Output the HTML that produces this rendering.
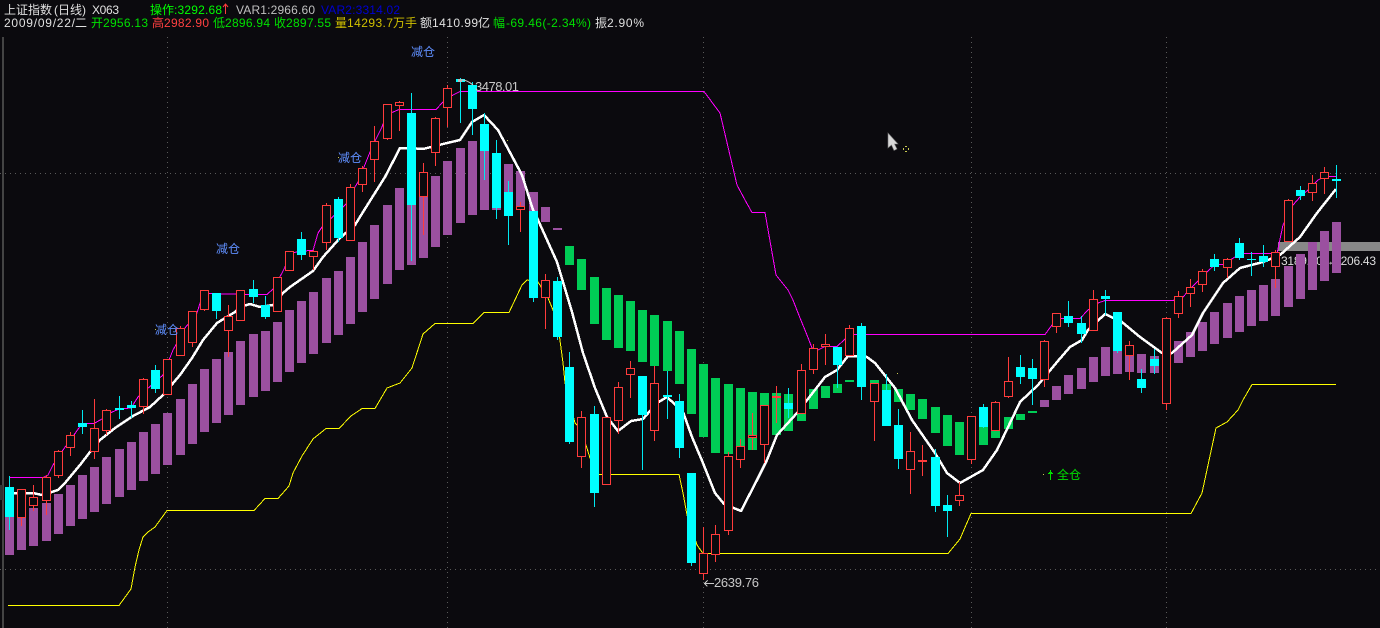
<!DOCTYPE html>
<html lang="zh"><head><meta charset="utf-8"><title>上证指数</title>
<style>
html,body{margin:0;padding:0;background:#0b0a0e;width:1380px;height:628px;overflow:hidden}
svg{display:block;position:absolute;left:0;top:0}
text{font-family:"Liberation Sans","WenQuanYi Zen Hei","Noto Sans CJK SC",sans-serif;font-size:12px}
</style></head><body>
<svg width="1380" height="628" viewBox="0 0 1380 628" xmlns="http://www.w3.org/2000/svg">
<rect width="1380" height="628" fill="#0b0a0e"/>
<g shape-rendering="crispEdges">
<rect x="2" y="37" width="2" height="591" fill="#444"/>
<rect x="0" y="485" width="3" height="15" fill="#333"/>
<path d="M0 173.5H1380M0 569.5H1380M167.5 37V628M447.5 37V628M703.5 37V628M971.5 37V628M1166.5 37V628" stroke="#5a5a5a" stroke-width="1" stroke-dasharray="1 4" fill="none"/>
<rect x="1278" y="242" width="102" height="9" fill="#888"/>
</g>
<text x="1281" y="265" fill="#ddd" textLength="95" lengthAdjust="spacing">3189.00→3206.43</text>
<g shape-rendering="crispEdges">
<path fill="#9b50a0" d="M5 510h9V555h-9zM17 505h9V550h-9zM29 508h9V546h-9zM42 503h9V541h-9zM54 494h9V534h-9zM66 485h9V526h-9zM78 475h9V519h-9zM90 467h9V512h-9zM102 457h9V504h-9zM115 449h9V497h-9zM127 442h9V490h-9zM139 432h9V481h-9zM151 424h9V474h-9zM163 413h9V465h-9zM176 399h9V455h-9zM188 384h9V444h-9zM200 369h9V432h-9zM212 359h9V423h-9zM224 352h9V415h-9zM236 341h9V405h-9zM249 334h9V397h-9zM261 331h9V391h-9zM273 322h9V382h-9zM285 310h9V372h-9zM297 301h9V363h-9zM309 292h9V354h-9zM322 278h9V343h-9zM334 271h9V335h-9zM346 257h9V324h-9zM358 242h9V312h-9zM370 225h9V299h-9zM383 205h9V284h-9zM395 188h9V270h-9zM407 175h9V265h-9zM419 175h9V258h-9zM431 176h9V247h-9zM443 161h9V235h-9zM456 148h9V223h-9zM468 141h9V215h-9zM480 150h9V210h-9zM492 160h9V210h-9zM504 164h9V210h-9zM516 171h9V210h-9zM529 192h9V215h-9zM541 207h9V222h-9zM553 228h9V230h-9zM1040 400h9V407h-9zM1052 386h9V400h-9zM1064 375h9V394h-9zM1077 368h9V389h-9zM1089 357h9V382h-9zM1101 347h9V376h-9zM1113 345h9V374h-9zM1125 345h9V372h-9zM1137 354h9V373h-9zM1150 356h9V373h-9zM1174 341h9V363h-9zM1186 332h9V357h-9zM1198 322h9V351h-9zM1210 312h9V344h-9zM1223 303h9V338h-9zM1235 296h9V332h-9zM1247 290h9V326h-9zM1259 285h9V321h-9zM1271 279h9V316h-9zM1284 266h9V307h-9zM1296 254h9V299h-9zM1308 242h9V290h-9zM1320 231h9V281h-9zM1332 222h9V273h-9z"/>
<path fill="#00cc55" d="M565 246h9V265h-9zM577 259h9V290h-9zM590 277h9V324h-9zM602 288h9V340h-9zM614 295h9V348h-9zM626 301h9V351h-9zM638 310h9V362h-9zM650 315h9V366h-9zM663 321h9V371h-9zM675 331h9V384h-9zM687 349h9V414h-9zM699 364h9V437h-9zM711 378h9V453h-9zM724 384h9V454h-9zM736 388h9V446h-9zM748 392h9V450h-9zM760 393h9V444h-9zM772 393h9V435h-9zM784 394h9V431h-9zM797 398h9V421h-9zM809 389h9V409h-9zM821 386h9V398h-9zM833 384h9V393h-9zM845 380h9V382h-9zM870 380h9V384h-9zM882 384h9V392h-9zM894 389h9V402h-9zM906 394h9V410h-9zM918 399h9V419h-9zM931 407h9V433h-9zM943 415h9V446h-9zM955 422h9V455h-9zM979 425h9V445h-9zM991 425h9V438h-9zM1004 417h9V429h-9zM1016 414h9V420h-9zM1028 411h9V413h-9z"/>
<polyline fill="none" stroke="#ffff00" stroke-width="1" points="8,605.5 119,605.5 131,589 135,567 139,550 143,537 148,532 155,527 167,510.5 254,510.5 265,498.5 278,498.5 289,486 293,473 302,456 313,439 326,428.5 339,428.5 351,416 362,408.5 375,408.5 387,388 400,383 412,368 423,334 435,323.5 473,323.5 484,312.5 509,312.5 522,285 527,280 538,282 548,298 553,310 559,333 563,363 565,383 575,423 577,425 586,445 590,458 599,474.5 679,474.5 683,493 687,515 697,545 703,553.5 948,553.5 960,539 971,513.5 1191,513.5 1202,493 1216,428 1227,422 1238,410 1243,400 1252,384.5 1336,384.5"/>
<polyline fill="none" stroke="#ff00ff" stroke-width="1" points="9,477.5 43,477.5 48,475 53,465 63,450 68,443 74,435 82,423.5 94,423.5 102,419 110,413 119,409 131,408 138,397 163,375 173,350 177,343 185,328 197,313 201,300 208,293.5 245,294.5 267,294.5 273,289 282,273 285,267 290,253 309,250.5 313,250.5 318,233 322,227 340,210 347,203 355,187 358,182 368,157 372,147 382,127 387,112.5 392,112.5 399,109.5 436,109.5 443,102 453,95 460,91.5 704,91.5 720,113 737,185 745,200 752,212.5 765,212.5 776,275 788,290 793,300 800,318 807,335 812,348 818,350 825,346.5 837,346.5 845,339 854,334.5 1045,334.5 1052,325 1057,318.5 1080,318.5 1088,310 1098,303 1105,300.5 1173,300.5 1183,297 1192,287 1207,272 1215,264.5 1223,264.5 1235,257 1243,253.5 1277,253.5 1283,225 1293,205 1300,197 1308,190 1318,180 1325,176.5 1336,176.5"/>
<polyline fill="none" stroke="#ffffff" stroke-width="2.5" stroke-linejoin="round" points="14,493 33,493 42,495 58,490 65,483 80,465 90,452 100,440 115,428 133,416 150,407 163,395 180,375 192,358 203,340 217,323 235,312 240,307 250,304 260,307 273,305 283,293 290,287 313,271 323,257 340,238 355,225 363,212 385,177 400,148 410,148 423,149 443,144 460,140 472,122 484,115 498,130 522,175 533,210 538,220 557,262 560,272 572,312 583,353 595,388 607,417 618,431 631,421 643,419 657,403 667,397 683,412 692,437 703,463 715,493 724,504 741,511 757,480 767,460 777,435 797,413 825,377 837,370 848,356 867,357 875,363 895,388 912,420 935,453 947,473 960,483 983,470 997,450 1010,423 1020,402 1038,385 1057,362 1070,347 1082,340 1088,330 1105,314 1122,322 1140,337 1162,353 1172,353 1192,335 1203,313 1223,283 1240,268 1263,262 1280,255 1300,237 1317,213 1336,189"/>
<path fill="none" stroke="#00e8f0" stroke-width="1" d="M9.5 476V530M82.5 410V434M119.5 396V419M131.5 401V418M155.5 365V393M216.5 293V319M253.5 280V303M265.5 296V319M301.5 232V260M338.5 197V242M411.5 93V261M460.5 78V123M472.5 82V135M484.5 113V180M496.5 140V219M508.5 181V245M533.5 211V302M557.5 277V340M569.5 352V444M594.5 406V507M642.5 376V470M667.5 371V419M679.5 394V458M691.5 473V566M788.5 388V418M837.5 347V388M861.5 323V400M886.5 374V426M898.5 409V469M935.5 449V512M947.5 495V537M983.5 404V428M1020.5 355V384M1032.5 359V405M1068.5 301V327M1081.5 316V343M1105.5 290V315M1117.5 312V353M1141.5 369V393M1154.5 349V374M1214.5 254V271M1239.5 238V260M1251.5 252V276M1263.5 245V267M1300.5 186V200M1336.5 165V198"/>
<path fill="none" stroke="#ff3c3c" stroke-width="1" d="M21.5 489V526M33.5 485V511M46.5 475V515M58.5 450V478M70.5 432V456M94.5 399V459M106.5 409V435M143.5 378V414M180.5 326V355M192.5 311V347M204.5 290V311M228.5 305V357M289.5 251V271M313.5 250V270M326.5 203V250M350.5 184V241M362.5 166V192M374.5 126V182M387.5 104V140M399.5 101V131M423.5 163V235M435.5 117V166M447.5 85V127M520.5 202V232M545.5 274V329M581.5 411V468M618.5 382V434M630.5 361V398M654.5 366V441M703.5 527V580M715.5 525V562M728.5 452V535M740.5 439V468M752.5 413V450M764.5 405V463M776.5 386V423M801.5 364V414M813.5 344V374M825.5 334V365M849.5 325V355M874.5 383V441M910.5 432V494M922.5 445V476M959.5 482V506M971.5 416V464M995.5 401V430M1008.5 357V398M1044.5 340V387M1056.5 313V333M1093.5 290V331M1129.5 341V380M1166.5 317V410M1178.5 291V318M1190.5 279V307M1202.5 269V292M1227.5 258V278M1275.5 250V288M1288.5 199V241M1312.5 175V201M1324.5 167V194"/>
<path fill="#00ffff" d="M5 487h9V517h-9zM78 423h9V427h-9zM115 408h9V410h-9zM127 405h9V408h-9zM151 370h9V389h-9zM212 293h9V311h-9zM249 289h9V297h-9zM261 305h9V317h-9zM297 239h9V255h-9zM334 199h9V238h-9zM407 113h9V205h-9zM456 79h9V82h-9zM468 85h9V109h-9zM480 124h9V151h-9zM492 153h9V208h-9zM504 192h9V216h-9zM529 211h9V298h-9zM553 281h9V337h-9zM565 367h9V442h-9zM590 414h9V493h-9zM638 376h9V415h-9zM663 395h9V397h-9zM675 401h9V448h-9zM687 473h9V563h-9zM784 403h9V409h-9zM833 347h9V365h-9zM857 326h9V387h-9zM882 390h9V426h-9zM894 425h9V459h-9zM931 457h9V506h-9zM943 505h9V511h-9zM979 407h9V427h-9zM1016 367h9V377h-9zM1028 368h9V379h-9zM1064 316h9V323h-9zM1077 323h9V334h-9zM1101 296h9V299h-9zM1113 312h9V351h-9zM1137 379h9V388h-9zM1150 359h9V366h-9zM1210 259h9V267h-9zM1235 243h9V258h-9zM1247 259h9V260h-9zM1259 256h9V262h-9zM1296 190h9V196h-9zM1332 179h9V181h-9z"/>
<path fill="#0b0a0e" stroke="#ff3c3c" stroke-width="1" d="M17.5 489.5h8V517.5h-8zM29.5 497.5h8V505.5h-8zM42.5 477.5h8V500.5h-8zM54.5 451.5h8V475.5h-8zM66.5 435.5h8V447.5h-8zM90.5 428.5h8V451.5h-8zM102.5 410.5h8V430.5h-8zM139.5 379.5h8V406.5h-8zM163.5 359.5h8V394.5h-8zM176.5 328.5h8V355.5h-8zM188.5 311.5h8V342.5h-8zM200.5 290.5h8V309.5h-8zM224.5 316.5h8V330.5h-8zM236.5 290.5h8V320.5h-8zM273.5 277.5h8V311.5h-8zM285.5 251.5h8V270.5h-8zM309.5 251.5h8V256.5h-8zM322.5 205.5h8V242.5h-8zM346.5 187.5h8V240.5h-8zM358.5 168.5h8V184.5h-8zM370.5 141.5h8V159.5h-8zM383.5 104.5h8V138.5h-8zM395.5 102.5h8V105.5h-8zM419.5 172.5h8V196.5h-8zM431.5 118.5h8V152.5h-8zM443.5 88.5h8V107.5h-8zM516.5 206.5h8V209.5h-8zM541.5 280.5h8V297.5h-8zM577.5 417.5h8V456.5h-8zM602.5 417.5h8V484.5h-8zM614.5 387.5h8V420.5h-8zM626.5 368.5h8V374.5h-8zM650.5 383.5h8V430.5h-8zM699.5 553.5h8V573.5h-8zM711.5 534.5h8V554.5h-8zM724.5 456.5h8V530.5h-8zM736.5 446.5h8V459.5h-8zM748.5 435.5h8V437.5h-8zM760.5 405.5h8V444.5h-8zM797.5 370.5h8V413.5h-8zM809.5 348.5h8V369.5h-8zM821.5 344.5h8V346.5h-8zM845.5 328.5h8V355.5h-8zM870.5 383.5h8V401.5h-8zM906.5 451.5h8V469.5h-8zM955.5 495.5h8V500.5h-8zM967.5 416.5h8V459.5h-8zM991.5 402.5h8V430.5h-8zM1004.5 381.5h8V396.5h-8zM1040.5 341.5h8V379.5h-8zM1052.5 313.5h8V326.5h-8zM1089.5 299.5h8V330.5h-8zM1125.5 345.5h8V355.5h-8zM1162.5 318.5h8V403.5h-8zM1174.5 296.5h8V313.5h-8zM1186.5 287.5h8V293.5h-8zM1198.5 271.5h8V284.5h-8zM1223.5 259.5h8V267.5h-8zM1271.5 252.5h8V266.5h-8zM1284.5 200.5h8V241.5h-8zM1308.5 183.5h8V192.5h-8zM1320.5 172.5h8V178.5h-8z"/>
<path fill="#ff3c3c" d="M772 396h9v2h-9zM918 460h9v2h-9z"/>
<path fill="#c8c850" d="M155 329h1v1h-1zM338 157h1v1h-1zM507 140h1v1h-1zM897 373h1v1h-1zM1043 474h1v1h-1zM905 146h2v1h-2zM905 151h2v1h-2zM903 148h1v2h-1zM908 148h1v2h-1z"/>
<path fill="#00e000" d="M1050 474h1v6h-1zM1049 472h3v2h-3zM1050 470h1v2h-1zM1048 474h1v-1h-1zM1052 474h1v-1h-1z"/>
<path fill="none" stroke="#c8c8c8" stroke-width="1" d="M704 583.5H714M707.5 580.5L704.5 583.5L707.5 586.5"/>
</g>
<path d="M460 80Q466 79 473 85" fill="none" stroke="#ccc" stroke-width="1"/>
<rect x="458" y="79" width="4" height="3" fill="#bbb"/>
<path d="M888 133L888 148L891.5 145L894 150.5L897 149L894.5 144L898 144Z" fill="#d8d8d8" stroke="#777" stroke-width=".6"/>
<text x="475" y="91" fill="#c8c8c8" style="font-size:13px" textLength="44" lengthAdjust="spacing">3478.01</text>
<text x="714" y="587" fill="#c8c8c8" style="font-size:13px" textLength="45" lengthAdjust="spacing">2639.76</text>
<g fill="#6090ff">
<text x="155" y="334">减仓</text>
<text x="216" y="253">减仓</text>
<text x="338" y="162">减仓</text>
<text x="411" y="56">减仓</text>
</g>
<text x="1057" y="479" fill="#00e000">全仓</text>
<g fill="#e0e0e0">
<text x="4" y="14">上证指数</text>
<text x="54" y="14">(日线)</text>
<text x="92" y="14" textLength="27" lengthAdjust="spacing">X063</text>
<text x="4" y="27" textLength="71" lengthAdjust="spacing">2009/09/22/</text>
<text x="75" y="27">二</text>
<text x="420" y="27">额</text>
<text x="432" y="27" textLength="46" lengthAdjust="spacing">1410.99</text>
<text x="478" y="27">亿</text>
<text x="595" y="27">振</text>
<text x="607" y="27" textLength="37" lengthAdjust="spacing">2.90%</text>
</g>
<text x="150" y="14" fill="#00ff00">操作</text>
<text x="174" y="14" fill="#00ff00" textLength="48" lengthAdjust="spacing">:3292.68</text>
<path d="M225.5 4V14M223 7L225.5 4L228 7" fill="none" stroke="#ff3c3c" stroke-width="1"/>
<text x="236" y="14" fill="#c0c0c0" textLength="79" lengthAdjust="spacing">VAR1:2966.60</text>
<text x="321" y="14" fill="#0000d0" textLength="79" lengthAdjust="spacing">VAR2:3314.02</text>
<g fill="#00e000">
<text x="91" y="27">开</text>
<text x="103" y="27" textLength="45" lengthAdjust="spacing">2956.13</text>
<text x="213" y="27">低</text>
<text x="225" y="27" textLength="45" lengthAdjust="spacing">2896.94</text>
<text x="274" y="27">收</text>
<text x="286" y="27" textLength="45" lengthAdjust="spacing">2897.55</text>
<text x="493" y="27">幅</text>
<text x="506" y="27" textLength="85" lengthAdjust="spacing">-69.46(-2.34%)</text>
</g>
<text x="152" y="27" fill="#ff4040">高</text>
<text x="164" y="27" fill="#ff4040" textLength="45" lengthAdjust="spacing">2982.90</text>
<text x="335" y="27" fill="#d0c000">量</text>
<text x="347" y="27" fill="#d0c000" textLength="46" lengthAdjust="spacing">14293.7</text>
<text x="393" y="27" fill="#d0c000">万手</text>
</svg>
</body></html>
